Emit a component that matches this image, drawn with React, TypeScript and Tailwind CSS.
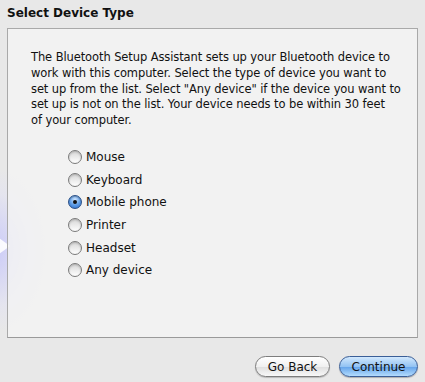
const devices = ["Mouse", "Keyboard", "Mobile phone", "Printer", "Headset", "Any device"];

function Radio({ checked }: { checked: boolean }) {
  if (checked) {
    return (
      <span className="w-[14px] h-[14px] rounded-full border border-[#2a4f86] bg-[radial-gradient(circle_at_50%_30%,#cfe6ff_0%,#5b9be6_55%,#2c6ac8_100%)] flex items-center justify-center shadow-[inset_0_1px_1px_rgba(0,0,0,0.25)]">
        <span className="w-[4px] h-[4px] rounded-full bg-[#111]" />
      </span>
    );
  }
  return (
    <span className="w-[14px] h-[14px] rounded-full border border-[#7a7a7a] bg-[linear-gradient(#d6d6d6,#ffffff)] shadow-[inset_0_1px_2px_rgba(0,0,0,0.2)]" />
  );
}

export default function App() {
  return (
    <div className="relative w-[425px] h-[382px] bg-[#e8e8e8] overflow-hidden font-['DejaVu_Sans','Liberation_Sans',sans-serif] text-[#111]">
      {/* faint bluetooth watermark */}
      <div className="absolute left-[-55px] top-[170px] w-[100px] h-[160px] rounded-full bg-[radial-gradient(ellipse_at_center,rgba(200,200,250,0.9),rgba(225,225,245,0.5)_50%,rgba(232,232,240,0)_72%)]" />
      <div className="absolute left-[-4px] top-[236px] w-0 h-0 border-y-[10px] border-y-transparent border-l-[14px] border-l-white/90" />
      <div className="relative flex flex-col h-full">
        <div className="h-[28px] pl-[7px] pt-[5px] text-[12px] font-bold leading-[16px]">Select Device Type</div>
        <div className="mx-[7px] h-[310px] border border-[#a9a9a9] border-b-[#9a9a9a] bg-[rgba(244,244,244,0.8)] pl-[23px] pr-[10px] pt-[21px]">
          <p className="text-[11.5px] leading-[15.8px] tracking-[-0.1px]">
            The Bluetooth Setup Assistant sets up your Bluetooth device to
            <br />
            work with this computer. Select the type of device you want to
            <br />
            set up from the list. Select "Any device" if the device you want to
            <br />
            set up is not on the list. Your device needs to be within 30 feet
            <br />
            of your computer.
          </p>
          <div className="flex flex-col gap-[8.7px] mt-[21px] ml-[37px]">
            {devices.map((d) => (
              <label key={d} className="flex items-center gap-[4px] h-[14px] text-[12px]">
                <Radio checked={d === "Mobile phone"} />
                <span>{d}</span>
              </label>
            ))}
          </div>
        </div>
        <div className="flex justify-end gap-[9px] pr-[7px] pt-[18px]">
          <button className="w-[75px] h-[21px] rounded-full border border-[#7d7d7d] bg-[linear-gradient(#ffffff,#f0f0f0_50%,#dedede_51%,#f8f8f8)] text-[12px] leading-none shadow-[0_1px_1px_rgba(0,0,0,0.2)]">
            Go Back
          </button>
          <button className="w-[79px] h-[21px] rounded-full border border-[#3a5e97] bg-[linear-gradient(#d2e8fd,#93c3f3_50%,#62a2ea_51%,#b3dcfd)] text-[12px] leading-none shadow-[0_1px_1px_rgba(0,0,0,0.25)]">
            Continue
          </button>
        </div>
      </div>
    </div>
  );
}
